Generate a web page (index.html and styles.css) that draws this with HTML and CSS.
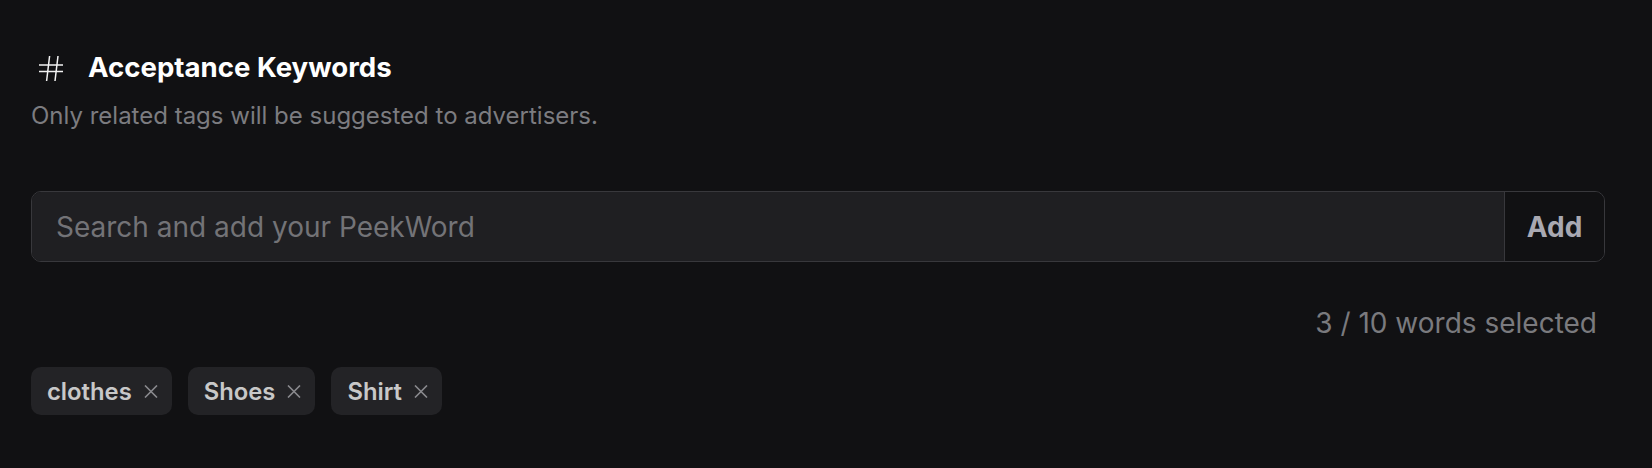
FILE: index.html
```
<!DOCTYPE html>
<html lang="en">
<head>
<meta charset="utf-8">
<title>Acceptance Keywords</title>
<link rel="stylesheet" href="styles.css">
</head>
<body>
<section class="panel">
  <div class="header">
    <svg class="hash" viewBox="0 0 24 25" width="24" height="25" aria-hidden="true">
      <path d="M0 9H24M0 15.6H24M10.6 0L7.6 25M19 0L16 25" fill="none" stroke="#f2f2f2" stroke-width="1.5"/>
    </svg>
    <h2 class="title">Acceptance Keywords</h2>
  </div>
  <p class="subtitle">Only related tags will be suggested to advertisers.</p>
  <div class="search">
    <input class="search-input" type="text" placeholder="Search and add your PeekWord">
    <button class="add-btn" type="button">Add</button>
  </div>
  <div class="counter">3 / 10 words selected</div>
  <div class="tags">
    <span class="tag">clothes<svg class="x" viewBox="0 0 14 13" width="14" height="13" aria-hidden="true"><path d="M1 0.5L13 12.5M13 0.5L1 12.5" stroke="#8a8a8e" stroke-width="1.6" fill="none"/></svg></span>
    <span class="tag">Shoes<svg class="x" viewBox="0 0 14 13" width="14" height="13" aria-hidden="true"><path d="M1 0.5L13 12.5M13 0.5L1 12.5" stroke="#8a8a8e" stroke-width="1.6" fill="none"/></svg></span>
    <span class="tag">Shirt<svg class="x" viewBox="0 0 14 13" width="14" height="13" aria-hidden="true"><path d="M1 0.5L13 12.5M13 0.5L1 12.5" stroke="#8a8a8e" stroke-width="1.6" fill="none"/></svg></span>
  </div>
</section>
</body>
</html>
```
FILE: styles.css
```
* { box-sizing: border-box; }
html, body {
  margin: 0;
  background: #111113;
  font-family: Inter, "Noto Sans", sans-serif;
}
.panel {
  padding: 51px 47px 0 31px;
}
.header {
  display: flex;
  align-items: center;
  height: 32px;
}
.hash {
  margin-left: 8px;
  margin-top: 3px;
  flex: none;
}
.title {
  margin: 0 0 0 25px;
  font-size: 27.6px;
  line-height: 32px;
  font-weight: 700;
  color: #ffffff;
}
.subtitle {
  margin: 19px 0 0 0;
  font-size: 24px;
  line-height: 28px;
  color: #7c7c80;
}
.search {
  margin-top: 61px;
  display: flex;
  height: 71px;
  border: 1px solid #38383c;
  border-radius: 10px;
  overflow: hidden;
}
.search-input {
  flex: 1;
  min-width: 0;
  border: none;
  outline: none;
  background: #1f1f22;
  padding: 0 0 0 24px;
  font-family: Inter, "Noto Sans", sans-serif;
  font-size: 28px;
  color: #e0e0e0;
}
.search-input::placeholder {
  color: #737377;
}
.add-btn {
  width: 100px;
  flex: none;
  border: none;
  border-left: 1px solid #38383c;
  background: #111113;
  color: #a9a9b2;
  font-family: Inter, "Noto Sans", sans-serif;
  font-size: 28px;
  font-weight: 700;
  padding: 0;
}
.counter {
  margin-top: 45px;
  text-align: right;
  padding-right: 8px;
  font-size: 28px;
  line-height: 32px;
  color: #7a7a7e;
}
.tags {
  margin-top: 28px;
  display: flex;
  gap: 16px;
}
.tag {
  display: inline-flex;
  align-items: center;
  gap: 12px;
  height: 48px;
  padding: 0 14px 0 16px;
  border-radius: 10px;
  background: #232326;
  color: #c8c8c8;
  font-size: 23.8px;
  font-weight: 600;
}
.x { flex: none; }
```
